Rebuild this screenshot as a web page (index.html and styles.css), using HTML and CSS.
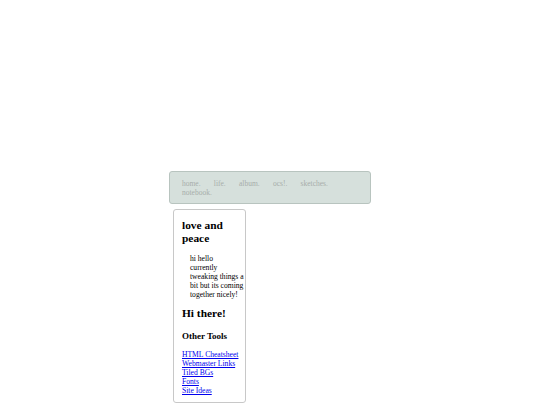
FILE: index.html
```html
<!DOCTYPE html>
<html>
<head>
<meta charset="utf-8">
<link rel="stylesheet" href="styles.css">
</head>
<body>
<div class="wrap">
  <nav class="nav">
    <a href="#">home.</a>
    <a href="#">life.</a>
    <a href="#">album.</a>
    <a href="#">ocs!.</a>
    <a href="#">sketches.</a>
    <a href="#">notebook.</a>
  </nav>
  <aside class="side">
    <h2 class="title">love and peace</h2>
    <p class="intro">hi hello<br>currently tweaking things a bit but its coming together nicely!</p>
    <h2 class="hello">Hi there!</h2>
    <h3 class="tools">Other Tools</h3>
    <ul class="links">
      <li><a href="#">HTML Cheatsheet</a></li>
      <li><a href="#">Webmaster Links</a></li>
      <li><a href="#">Tiled BGs</a></li>
      <li><a href="#">Fonts</a></li>
      <li><a href="#">Site Ideas</a></li>
    </ul>
  </aside>
</div>
</body>
</html>
```
FILE: styles.css
```css
html, body {
  margin: 0;
  padding: 0;
  background: #ffffff;
}
body {
  font-family: "Liberation Serif", "Times New Roman", serif;
  font-size: 7.6px;
  color: #000;
}
.wrap {
  width: 202px;
  margin: 171px auto 0;
}
.nav {
  display: flex;
  flex-wrap: wrap;
  column-gap: 13.3px;
  background: #d6e0dc;
  border: 1px solid #b8c4bf;
  border-radius: 3px;
  padding: 7px 12px 6px 12px;
  font-size: 7.5px;
  line-height: 9px;
}
.nav a {
  color: #a7adaa;
  text-decoration: none;
}
.side {
  margin: 5px 0 0 4px;
  width: 55px;
  height: 192px;
  border: 1px solid #c8c8c8;
  border-radius: 3px;
  padding: 0 8px;
  background: #fff;
}
.title {
  font-size: 11.4px;
  margin: 9px 0 0 0;
  line-height: 12.8px;
}
.intro {
  width: 56px;
  margin: 9.6px 0 0 8px;
  line-height: 9px;
}
.hello {
  font-size: 11.4px;
  line-height: 12.8px;
  margin: 8.3px 0 0 0;
}
.tools {
  font-size: 9px;
  line-height: 10.4px;
  margin: 10.6px 0 0 0;
}
.links {
  list-style: none;
  margin: 8.6px 0 0 0;
  padding: 0;
  line-height: 9px;
}
.links a {
  color: #0000ee;
  white-space: nowrap;
}
```
